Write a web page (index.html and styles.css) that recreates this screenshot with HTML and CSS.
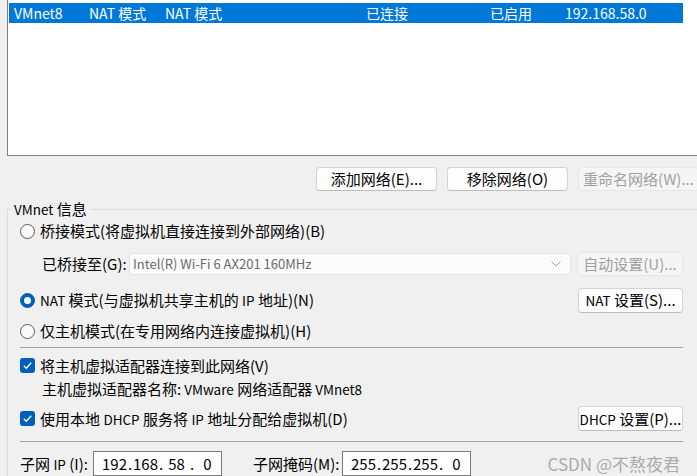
FILE: index.html
```html
<!DOCTYPE html>
<html lang="zh-CN">
<head>
<meta charset="utf-8">
<title>虚拟网络编辑器</title>
<link rel="stylesheet" href="styles.css">
</head>
<body>
<div class="list">
  <div class="row sel">
    <span>VMnet8</span>
    <span>NAT 模式</span>
    <span>NAT 模式</span>
    <span>已连接</span>
    <span>已启用</span>
    <span>192.168.58.0</span>
  </div>
</div>
<div class="btnbar">
  <button class="btn">添加网络(E)...</button>
  <button class="btn">移除网络(O)</button>
  <button class="btn disabled">重命名网络(W)...</button>
</div>
<fieldset class="group">
  <legend class="legend"><span class="l">VMnet</span> 信息</legend>
  <div class="opt r1"><span class="radio"></span><span>桥接模式(将虚拟机直接连接到外部网络)(B)</span></div>
  <div class="bridge">
    <span class="blabel">已桥接至(G):</span>
    <div class="combo"><span class="combo-text">Intel(R) Wi-Fi 6 AX201 160MHz</span><svg class="chev" width="10" height="6" viewBox="0 0 10 6"><polyline points="0.5,0.5 5,5 9.5,0.5" fill="none" stroke="#a8a8a8" stroke-width="1"/></svg></div>
    <button class="btn disabled auto">自动设置(U)...</button>
  </div>
  <div class="opt r3"><span class="radio on"></span><span class="grow"><span class="l">NAT</span> 模式(与虚拟机共享主机的 <span class="l">IP</span> 地址)(N)</span><button class="btn side"><span class="l">NAT</span> 设置(S)...</button></div>
  <div class="opt r4"><span class="radio"></span><span>仅主机模式(在专用网络内连接虚拟机)(H)</span></div>
  <hr class="sep">
  <div class="opt cb1"><svg class="check" width="15" height="15" viewBox="0 0 15 15"><rect x="0" y="0" width="15" height="15" rx="3" fill="#005fb8"/><polyline points="3.8,7.8 6.3,10.2 11.2,4.8" fill="none" stroke="#fff" stroke-width="1.3"/></svg><span>将主机虚拟适配器连接到此网络(V)</span></div>
  <div class="name">主机虚拟适配器名称: <span class="l">&nbsp;VMware</span>&nbsp;网络适配器 <span class="l">&nbsp;VMnet8</span></div>
  <div class="opt cb2"><svg class="check" width="15" height="15" viewBox="0 0 15 15"><rect x="0" y="0" width="15" height="15" rx="3" fill="#005fb8"/><polyline points="3.8,7.8 6.3,10.2 11.2,4.8" fill="none" stroke="#fff" stroke-width="1.3"/></svg><span class="grow">使用本地 <span class="l">DHCP</span> 服务将 <span class="l">IP</span> 地址分配给虚拟机(D)</span><button class="btn side"><span class="l">DHCP</span> 设置(P)...</button></div>
  <hr class="sep sep2">
  <div class="subnet">
    <span class="slabel1">子网 <span class="l">IP</span> (I):</span>
    <div class="ipbox"><span class="oct">192</span><span class="dot">.</span><span class="oct">168</span><span class="dot">.</span><span class="oct">58</span><span class="dot">.</span><span class="oct">0</span></div>
    <span class="slabel2">子网掩码(M):</span>
    <div class="ipbox"><span class="oct">255</span><span class="dot">.</span><span class="oct">255</span><span class="dot">.</span><span class="oct">255</span><span class="dot">.</span><span class="oct">0</span></div>
    <span class="mark">CSDN @不熬夜君</span>
  </div>
</fieldset>
</body>
</html>
```

FILE: styles.css
```css
html, body {
  margin: 0;
  padding: 0;
}
body {
  background: #f0f0f0;
  width: 697px;
  height: 476px;
  overflow: hidden;
  font-family: "Noto Sans CJK SC", "Microsoft YaHei", sans-serif;
  font-size: 15px;
  line-height: 20px;
  color: #000;
  white-space: nowrap;
}
.l {
  font-size: 13.5px;
}
.list {
  margin-left: 7px;
  height: 152px;
  padding: 3px 0 0 1px;
  background: #fff;
  border-left: 1px solid #828282;
  border-bottom: 1px solid #828282;
}
.row {
  box-sizing: border-box;
  width: 674px;
  height: 20px;
  padding-left: 5px;
  display: grid;
  grid-template-columns: 75px 76px 201px 124px 75px 1fr;
  align-items: center;
  font-size: 14px;
}
.sel {
  background: #0078d7;
  color: #fff;
}
.btnbar {
  display: flex;
  gap: 10px;
  margin-top: 11px;
  padding-left: 316px;
}
.btn {
  font: inherit;
  font-size: 15px;
  line-height: 20px;
  white-space: nowrap;
  overflow: hidden;
  box-sizing: border-box;
  height: 24px;
  width: 121px;
  flex-shrink: 0;
  padding: 0;
  background: #fdfdfd;
  color: #000;
  border: 1px solid #d3d3d3;
  border-bottom-color: #bcbcbc;
  border-radius: 4px;
}
.btn.disabled {
  background: #f5f5f5;
  color: #a0a0a0;
  border-color: #e6e6e6;
}
.group {
  margin: 9px 0 0 7px;
  padding: 1px 14px 0 12px;
  min-width: 0;
  border: none;
  border-top: 1px solid #dcdcdc;
  border-left: 1px solid #dcdcdc;
}
.legend {
  padding: 0 3px;
  margin-left: -9px;
  line-height: 18px;
}
.opt {
  display: flex;
  align-items: center;
  gap: 5px;
}
.grow {
  flex: 1;
}
.r1 { height: 24px; }
.r3 { height: 30px; }
.r4 { height: 32px; }
.cb1 { height: 23px; }
.cb2 { height: 35px; }
.radio {
  box-sizing: border-box;
  width: 15px;
  height: 15px;
  flex-shrink: 0;
  border-radius: 50%;
  border: 1px solid #5c5c5c;
  background: #f9f9f9;
  display: flex;
  align-items: center;
  justify-content: center;
}
.radio.on {
  background: #005fb8;
  border-color: #005fb8;
}
.radio.on::after {
  content: "";
  width: 7px;
  height: 7px;
  border-radius: 50%;
  background: #fff;
}
.check {
  flex-shrink: 0;
  display: block;
}
.bridge {
  height: 42px;
  display: flex;
  align-items: center;
  padding-left: 22px;
}
.blabel {
  width: 87px;
  flex-shrink: 0;
}
.combo {
  flex: 1;
  box-sizing: border-box;
  height: 22px;
  display: flex;
  align-items: center;
  justify-content: space-between;
  padding: 0 9px 0 3px;
  background: #fbfbfb;
  border: 1px solid #e4e4e4;
  border-radius: 2px;
  color: #6a6a6a;
  font-size: 13px;
}
.chev {
  display: block;
}
.auto {
  width: 106px;
  margin-left: 6px;
}
.side {
  width: 105px;
  height: 25px;
}
.sep {
  margin: 0 0 6px 0;
  height: 0;
  border: 0;
  border-top: 1px solid #a3a3a3;
}
.sep2 {
  margin: 5px 0 0 0;
}
.name {
  height: 24px;
  display: flex;
  align-items: center;
  padding-left: 22px;
}
.subnet {
  display: flex;
  align-items: center;
  padding-top: 9px;
}
.slabel1 {
  width: 73px;
  flex-shrink: 0;
}
.slabel2 {
  width: 89px;
  margin-left: 31px;
  flex-shrink: 0;
}
.ipbox {
  box-sizing: border-box;
  width: 129px;
  height: 25px;
  flex-shrink: 0;
  display: flex;
  align-items: center;
  padding-left: 8px;
  background: #fff;
  border: 1px solid #7a7a7a;
}
.oct {
  width: 25px;
  text-align: center;
}
.dot {
  width: 6px;
  text-align: center;
}
.mark {
  margin-left: auto;
  margin-right: 3px;
  color: #ababab;
  font-size: 17px;
}
```
